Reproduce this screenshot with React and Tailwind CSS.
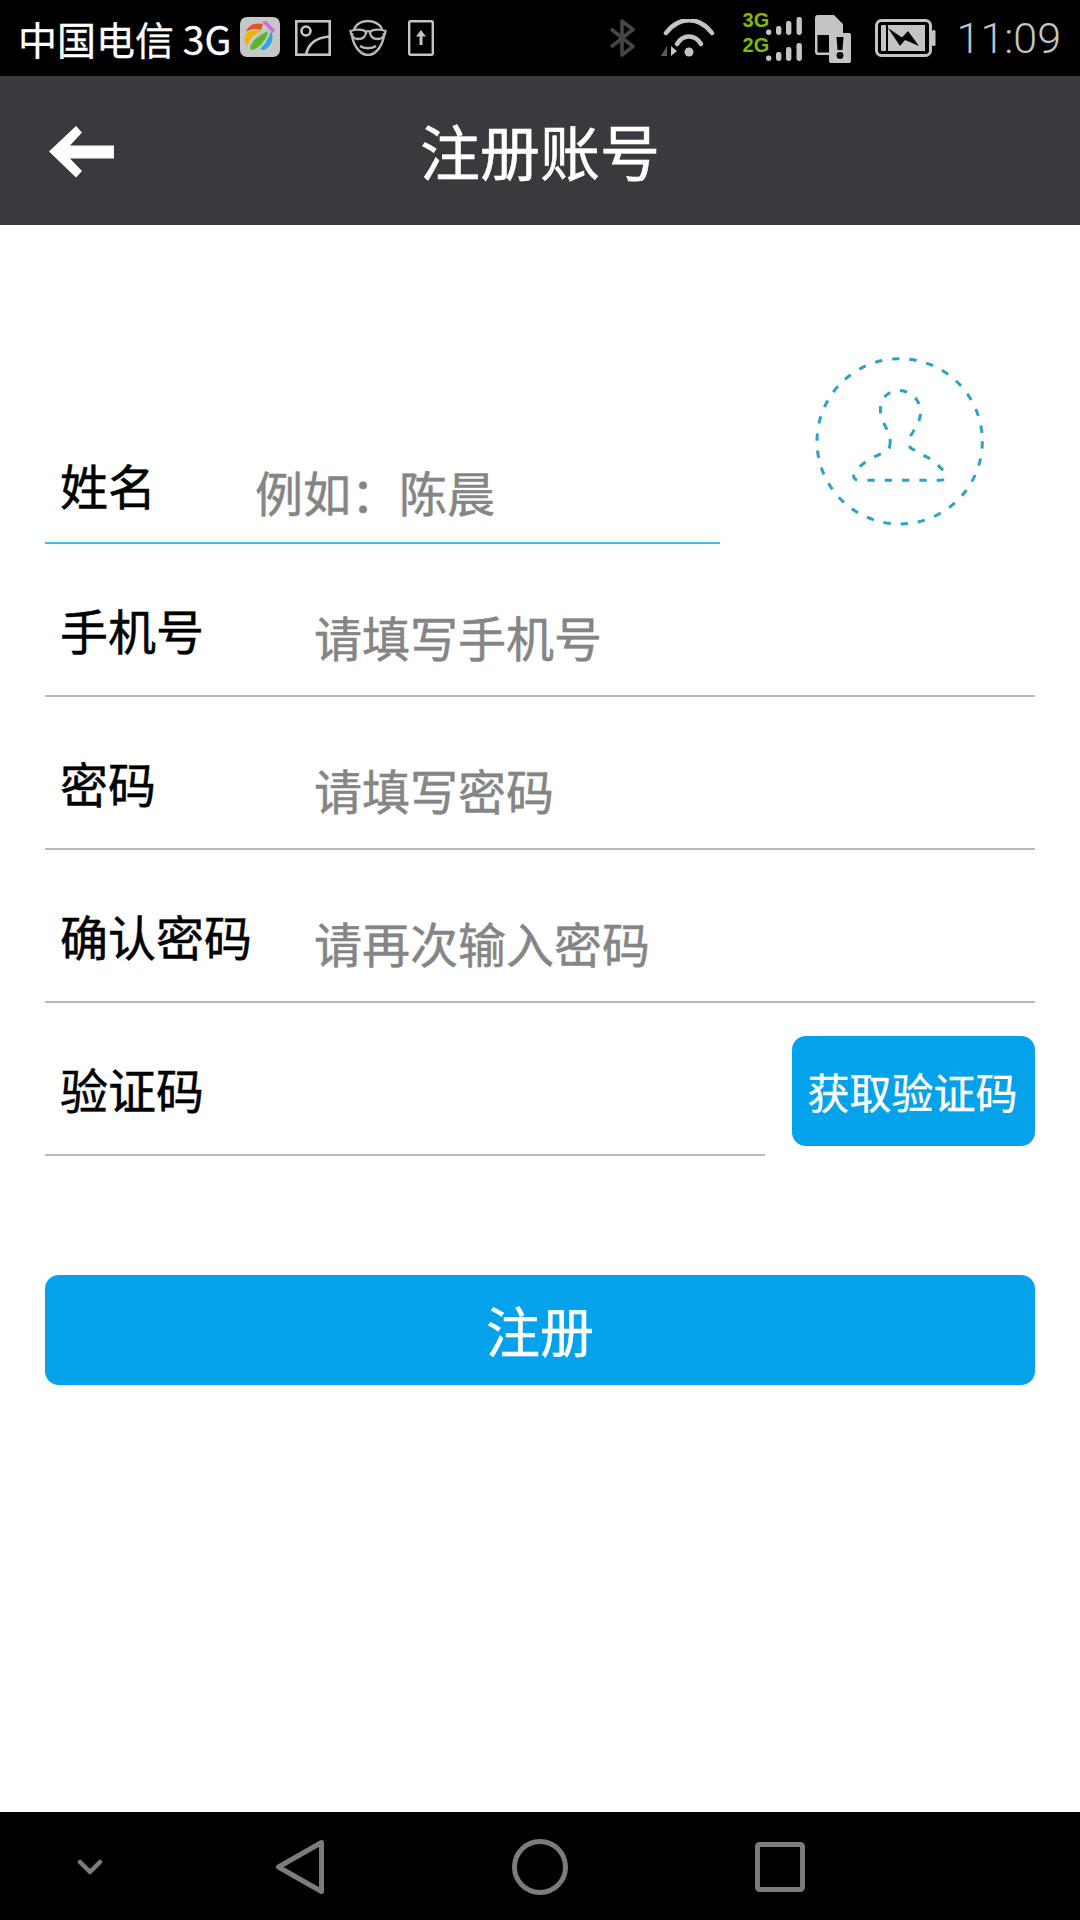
const cjk = "font-['Noto_Sans_CJK_SC','Liberation_Sans',sans-serif]";

function AppTile() {
  return (
    <svg width="40" height="40" viewBox="0 0 40 40" className="mt-[-2px]">
      <rect width="40" height="40" rx="7" fill="#c5c7c8" />
      <path d="M6 15 C8 8 16 5 23 7 L21 13 C16 11 10 12 6 15Z" fill="#e2571e" />
      <path d="M5 25 C4 20 5 17 7 15.5 C12 13 17 13 22 14 C16 16 10 20 8 28 C6 28 5 27 5 25Z" fill="#f0b400" />
      <path d="M10 31 C11 25 17 19 28 14 C27 21 21 30 13 33 C11 33 10 32 10 31Z" fill="#5cb531" />
      <path d="M24 33 C21 33 20 32 21 31 C25 27 29 21 31 14 C34 19 33 29 24 33Z" fill="#2ea7dc" />
      <path d="M22 5 L26 4 L35 13 L33 16 Z" fill="#c86dd7" />
    </svg>
  );
}

function ImageIcon() {
  return (
    <svg width="36" height="36" viewBox="0 0 36 36" fill="none" stroke="#c4c4c4" strokeWidth="2.6">
      <rect x="1.3" y="1.3" width="33.4" height="33.4" />
      <circle cx="11" cy="11" r="4.5" />
      <path d="M11 35 C13 24 21 17.5 35 16.5" />
    </svg>
  );
}

function GlassesIcon() {
  return (
    <svg width="38" height="36" viewBox="0 0 38 36" fill="none" stroke="#b8b8b8" strokeWidth="2.4">
      <path d="M5 9 C8 3 14 1 19 1 C25 1 31 4 33 9" />
      <path d="M3 13 C3 23 10 35 19 35 C28 35 35 23 35 13" />
      <path d="M1.5 11 C6 9 14 9 17 12 C17 16 14 19 9 19 C5 19 2 16 1.5 11Z" />
      <path d="M36.5 11 C32 9 24 9 21 12 C21 16 24 19 29 19 C33 19 36 16 36.5 11Z" />
      <path d="M17 12 C18 11 20 11 21 12" />
      <path d="M11 26 C15 29 23 29 27 26" />
    </svg>
  );
}

function UploadIcon() {
  return (
    <svg width="26" height="36" viewBox="0 0 26 36" fill="none">
      <rect x="1.2" y="1.2" width="23.6" height="33.6" rx="1.5" stroke="#c4c4c4" strokeWidth="2.4" />
      <path d="M13 10 L18 16.5 H14.5 V25 H11.5 V16.5 H8 Z" fill="#c4c4c4" />
    </svg>
  );
}

function BluetoothIcon() {
  return (
    <svg width="28" height="38" viewBox="0 0 28 38" fill="none" stroke="#454545" strokeWidth="3.6" strokeLinejoin="round">
      <path d="M2 10 L24 27.5 L13 36 V2 L24 10.5 L2 28" />
    </svg>
  );
}

function WifiIcon() {
  return (
    <svg width="55" height="38" viewBox="0 0 55 38" fill="none">
      <path d="M6 14 C19 -3 39 -3 52 14" stroke="#c4c4c4" strokeWidth="4.5" strokeLinecap="round" />
      <path d="M17 25 C23 15 35 15 41 25" stroke="#c4c4c4" strokeWidth="4.5" strokeLinecap="round" />
      <circle cx="29" cy="33" r="4.5" fill="#c4c4c4" />
      <path d="M7 27 V37 H1 Z" fill="#5e5e5e" />
      <path d="M11 27 L17 32 L11 37 Z" fill="#c4c4c4" />
    </svg>
  );
}

function Bars() {
  return (
    <svg width="36" height="18" viewBox="0 0 36 18" fill="#c4c4c4">
      <rect x="0" y="12.5" width="5.4" height="5.4" rx="2.4" />
      <rect x="10" y="9" width="5.4" height="9" rx="2.4" />
      <rect x="20" y="4" width="5.4" height="14" rx="2.4" />
      <rect x="30.5" y="0" width="5.4" height="18" rx="2.4" />
    </svg>
  );
}

function SimIcon() {
  return (
    <svg width="37" height="49" viewBox="0 0 37 49" fill="none">
      <path d="M1 4 C1 2 2 1 4 1 H20 L29 10 V29 H16 V41 H4 C2 41 1 40 1 38 Z" fill="#c4c4c4" />
      <path d="M3.5 21 H15 V38.5 H3.5 Z" fill="#000" />
      <rect x="15" y="19" width="22" height="30" rx="2" fill="#c4c4c4" />
      <path d="M22.5 23 H29.5 L28.5 36 H23.5 Z" fill="#000" />
      <circle cx="26" cy="41.5" r="3.4" fill="#000" />
    </svg>
  );
}

function BatteryIcon() {
  return (
    <svg width="61" height="38" viewBox="0 0 61 38" fill="none">
      <rect x="1.5" y="1.5" width="54" height="35" rx="5" stroke="#c4c4c4" strokeWidth="3" />
      <rect x="6" y="6" width="5" height="26" rx="1" fill="#c4c4c4" />
      <path d="M13 6 H50 V32 H13 Z" fill="#c4c4c4" />
      <path d="M13 9 L27 18.5 L33 12 L44 27 L30 21 L25 27 Z" fill="#000" />
      <rect x="57" y="11" width="3.5" height="16" rx="1.5" fill="#c4c4c4" />
    </svg>
  );
}

function BackArrow() {
  return (
    <svg width="65" height="52" viewBox="0 0 65 52" fill="#fff">
      <path d="M0 25.5 L27 0 L33 6.5 L21 19.5 H65 V32.5 H21 L33 45 L27 51.5 Z" />
    </svg>
  );
}

function Avatar() {
  return (
    <svg width="174" height="170" viewBox="100 50 522 510" fill="none" stroke="#2ba2c6" strokeWidth="9" strokeDasharray="22 30" className="mb-[17px] ml-[93px]">
      <circle cx="360" cy="303" r="248" />
      <path d="M330 318 C336 295 326 275 312 248 C294 210 300 170 335 155 C375 140 415 165 422 205 C426 235 412 255 400 275 C386 295 385 305 392 322 L430 345 C450 352 470 368 490 390 C505 405 497 420 480 420 L240 420 C222 420 218 408 226 396 C240 375 268 355 300 342 C318 336 328 330 330 318 Z" />
    </svg>
  );
}

function Row({ label, placeholder }) {
  return (
    <div className="flex h-[153px] items-end border-b-2 border-[#b9b9b9] pb-[42px] pl-[15px]">
      <span className="w-[254px] text-[48px] leading-[48px] text-black [-webkit-text-stroke:0.5px_#000]">{label}</span>
      <span className="mb-[-7px] text-[48px] leading-[48px] text-[#858585] [-webkit-text-stroke:0.5px_#858585]">{placeholder}</span>
    </div>
  );
}

export default function App() {
  return (
    <div className={`flex h-[1920px] w-[1080px] flex-col bg-white ${cjk}`}>
      <div className="flex h-[76px] items-center bg-black pl-[18px] pr-[19px]">
        <span className="mr-[9px] whitespace-nowrap text-[39px] leading-none text-white [-webkit-text-stroke:0.3px_#fff]">中国电信 3G</span>
        <AppTile />
        <div className="ml-[15px] flex items-center">
          <ImageIcon />
          <div className="ml-[18px]"><GlassesIcon /></div>
          <div className="ml-[21px]"><UploadIcon /></div>
        </div>
        <div className="ml-auto flex items-center">
          <BluetoothIcon />
          <div className="ml-[23px]"><WifiIcon /></div>
          <div className="relative ml-[28px] h-[50px] w-[60px]">
            <span className="absolute left-0 top-[-4px] font-['Liberation_Sans'] text-[20px] font-bold leading-[22px] text-[#7fba00]">3G</span>
            <span className="absolute left-0 top-[21px] font-['Liberation_Sans'] text-[20px] font-bold leading-[22px] text-[#7fba00]">2G</span>
            <div className="absolute left-[23px] top-[4px]"><Bars /></div>
            <div className="absolute left-[23px] top-[30px]"><Bars /></div>
          </div>
          <div className="ml-[11px]"><SimIcon /></div>
          <div className="ml-[24px]"><BatteryIcon /></div>
          <span className="ml-[21px] font-['Roboto'] text-[43px] font-light leading-none text-[#c4c4c4]">11:09</span>
        </div>
      </div>

      <div className="relative flex h-[149px] items-center justify-center bg-[#39393e]">
        <div className="absolute left-[49px] top-[50px]"><BackArrow /></div>
        <span className="mt-[-2px] text-[60px] leading-none text-white [-webkit-text-stroke:0.6px_#fff]">注册账号</span>
      </div>

      <div className="flex flex-1 flex-col px-[45px]">
        <div className="mt-[132px] flex items-end">
          <div className="flex h-[184px] w-[675px] items-end border-b-2 border-[#45b8ea] pb-[34px] pl-[15px]">
            <span className="w-[195px] text-[48px] leading-[48px] text-black [-webkit-text-stroke:0.5px_#000]">姓名</span>
            <span className="mb-[-7px] text-[48px] leading-[48px] text-[#858585] [-webkit-text-stroke:0.5px_#858585]">例如：陈晨</span>
          </div>
          <Avatar />
        </div>
        <Row label="手机号" placeholder="请填写手机号" />
        <Row label="密码" placeholder="请填写密码" />
        <Row label="确认密码" placeholder="请再次输入密码" />
        <div className="flex items-start justify-between">
          <div className="flex h-[153px] w-[720px] items-end border-b-2 border-[#b9b9b9] pb-[42px] pl-[15px]">
            <span className="text-[48px] leading-[48px] text-black [-webkit-text-stroke:0.5px_#000]">验证码</span>
          </div>
          <button className="mt-[33px] flex h-[110px] w-[243px] items-center justify-center rounded-[14px] bg-[#04a2ea] pr-[2px] text-[42px] leading-none text-white [-webkit-text-stroke:0.4px_#fff]">获取验证码</button>
        </div>
        <button className="mt-[119px] flex h-[110px] w-full items-center justify-center rounded-[14px] bg-[#04a2ea] text-[54px] leading-none text-white [-webkit-text-stroke:0.5px_#fff]">注册</button>
      </div>

      <div className="flex h-[108px] items-center bg-black pl-[77px] pt-[2px]">
        <svg width="26" height="16" viewBox="0 0 26 16" fill="none" stroke="#7c7c7c" strokeWidth="4.5" strokeLinecap="round" strokeLinejoin="round"><path d="M3 3 L13 13 L23 3" /></svg>
        <svg className="ml-[172px]" width="50" height="56" viewBox="0 0 50 56" fill="none" stroke="#7c7c7c" strokeWidth="5" strokeLinejoin="round"><path d="M46.5 3.5 V52.5 L3.5 28 Z" /></svg>
        <svg className="ml-[187px]" width="56" height="56" viewBox="0 0 56 56" fill="none" stroke="#7c7c7c" strokeWidth="5"><circle cx="28" cy="28" r="25.5" /></svg>
        <svg className="ml-[187px]" width="50" height="50" viewBox="0 0 50 50" fill="none" stroke="#7c7c7c" strokeWidth="5" strokeLinejoin="round"><rect x="2.5" y="2.5" width="45" height="45" rx="2" /></svg>
      </div>
    </div>
  );
}
